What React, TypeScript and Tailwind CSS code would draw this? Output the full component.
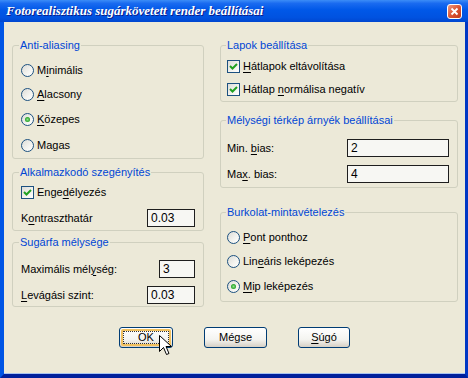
import React from 'react';

const U = ({ children }: { children: React.ReactNode }) => (
    <span className="underline underline-offset-[2px] decoration-[1px]">{children}</span>
);

const Check = () => (
    <span className="flex h-[13px] w-[13px] shrink-0 items-center justify-center border border-[#1C5180] bg-[linear-gradient(135deg,#DCDCD7_0%,#F4F4F0_60%,#FFFFFF_100%)]">
        <svg width="9" height="9" viewBox="0 0 9 9">
            <path d="M1 4 L3.5 6.5 L8 2" fill="none" stroke="#21A121" strokeWidth="2" />
        </svg>
    </span>
);

const Radio = ({ on = false }: { on?: boolean }) => (
    <span className="flex h-[13px] w-[13px] shrink-0 items-center justify-center rounded-full border border-[#1C5180] bg-[linear-gradient(135deg,#DCDCD7_0%,#F4F4F0_60%,#FFFFFF_100%)]">
        {on && <span className="h-[5px] w-[5px] rounded-full bg-[radial-gradient(circle,#8FE08F_0%,#21A121_70%,#1A8A1A_100%)]" />}
    </span>
);

const Field = ({ value, w }: { value: string; w: string }) => (
    <div className={`h-[18px] ${w} border border-[#1E1E1E] bg-[#F7F7F3] pl-[3px] leading-[16px] text-[12px]`}>
        {value}
    </div>
);

const Group = ({ title, h, ml = 'ml-[6px]', children }: { title: string; h: string; ml?: string; children: React.ReactNode }) => (
    <fieldset className={`${h} rounded-[3px] border border-[#D0D0BF]`}>
        <legend className={`${ml} px-[1px] leading-[13px] text-[#0046D5]`}>{title}</legend>
        {children}
    </fieldset>
);

const Btn = ({ w, children, focus = false }: { w: string; children: React.ReactNode; focus?: boolean }) => (
    <div className={`relative h-[21px] ${w} rounded-[3px] border border-[#003C74] bg-[linear-gradient(to_bottom,#FFFFFF_0%,#F4F4F0_60%,#D6D0C5_100%)] p-[1px]`}>
        <div className={`flex h-full w-full items-center justify-center rounded-[2px] ${focus ? 'border-2 border-[#F1C15F]' : ''}`}>
            <div className={`flex h-full w-full items-center justify-center ${focus ? 'outline outline-1 outline-dotted outline-[#333] -outline-offset-1' : ''}`}>
                {children}
            </div>
        </div>
        {focus && (
            <svg className="absolute left-[39px] top-[7px]" width="13" height="21" viewBox="0 0 13 21">
                <path d="M0.5 0.5 L0.5 16.5 L4.5 12.5 L7.5 19.5 L10 18.5 L7 11.5 L12.5 11.5 Z" fill="#FFFFFF" stroke="#000000" strokeWidth="1" />
            </svg>
        )}
    </div>
);

export default function App() {
    return (
        <div className="flex h-[378px] w-[468px] flex-col bg-[#0055E5] font-['Liberation_Sans',Arial,sans-serif] text-[11px] text-black">
            {/* Címsor */}
            <div className="flex h-[22px] shrink-0 items-center justify-between bg-[linear-gradient(to_bottom,#3C8DF7_0%,#1A6BF0_15%,#0058E8_45%,#0052E0_80%,#0046CF_100%)] pl-[6px] pr-[6px]">
                <span className="font-['Liberation_Serif',serif] text-[13px] font-bold italic text-white [text-shadow:1px_1px_0_#0A1E8C]">
                    Fotorealisztikus sugárkövetett render beállításai
                </span>
                <span className="flex h-[15px] w-[15px] items-center justify-center rounded-[3px] border border-white bg-[linear-gradient(135deg,#F09A80_0%,#DC5533_50%,#C03A1A_100%)]">
                    <svg width="9" height="9" viewBox="0 0 9 9">
                        <path d="M1.5 1.5 L7.5 7.5 M7.5 1.5 L1.5 7.5" stroke="#FFFFFF" strokeWidth="1.8" />
                    </svg>
                </span>
            </div>

            <div className="flex flex-1 border-b-[4px] border-l-[4px] border-r-[3px] border-b-[#00209C] border-l-[#0055E5] border-r-[#0037C4]">
                <div className="flex flex-1 flex-col bg-[#ECE9D8] border-b border-b-[#A8C3F0]">
                    <div className="flex items-start gap-[16px] pl-[8px] pt-[17px]">
                        {/* Bal oszlop */}
                        <div className="flex w-[192px] flex-col">
                            <Group title="Anti-aliasing" h="h-[120px]" ml="ml-[6px]">
                                <div className="flex flex-col pl-[8px]">
                                    <label className="mt-[12px] flex h-[13px] items-center gap-[3px]"><Radio /><span>M<U>i</U>nimális</span></label>
                                    <label className="mt-[11px] flex h-[13px] items-center gap-[3px]"><Radio /><span><U>A</U>lacsony</span></label>
                                    <label className="mt-[12px] flex h-[13px] items-center gap-[3px]"><Radio on /><span><U>K</U>özepes</span></label>
                                    <label className="mt-[13px] flex h-[13px] items-center gap-[3px]"><Radio /><span>Magas</span></label>
                                </div>
                            </Group>
                            <div className="mt-[7px]">
                                <Group title="Alkalmazkodó szegényítés" h="h-[65px]">
                                    <div className="flex flex-col pl-[8px] pr-[8px]">
                                        <label className="mt-[7px] flex h-[13px] items-center gap-[3px]"><Check /><span>Enge<U>d</U>élyezés</span></label>
                                        <div className="mt-[10px] flex items-center justify-between">
                                            <span>K<U>o</U>ntraszthatár</span>
                                            <Field value="0.03" w="w-[48px]" />
                                        </div>
                                    </div>
                                </Group>
                            </div>
                            <div className="mt-[5px]">
                                <Group title="Sugárfa mélysége" h="h-[71px]">
                                    <div className="flex flex-col pl-[8px] pr-[8px]">
                                        <div className="mt-[11px] flex items-center justify-between">
                                            <span>Maximális mél<U>y</U>ség:</span>
                                            <Field value="3" w="w-[36px]" />
                                        </div>
                                        <div className="mt-[8px] flex items-center justify-between">
                                            <span><U>L</U>evágási szint:</span>
                                            <Field value="0.03" w="w-[48px]" />
                                        </div>
                                    </div>
                                </Group>
                            </div>
                        </div>

                        {/* Jobb oszlop */}
                        <div className="flex w-[238px] flex-col">
                            <Group title="Lapok beállítása" h="h-[63px]" ml="ml-[5px]">
                                <div className="flex flex-col pl-[6px]">
                                    <label className="mt-[8px] flex h-[13px] items-center gap-[3px]"><Check /><span><U>H</U>átlapok eltávolítása</span></label>
                                    <label className="mt-[10px] flex h-[13px] items-center gap-[3px]"><Check /><span>Hátlap <U>n</U>ormálisa negatív</span></label>
                                </div>
                            </Group>
                            <div className="mt-[12px]">
                                <Group title="Mélységi térkép árnyék beállításai" h="h-[74px]" ml="ml-[5px]">
                                    <div className="flex flex-col pl-[6px] pr-[8px]">
                                        <div className="mt-[12px] flex items-center justify-between">
                                            <span>Min. <U>b</U>ias:</span>
                                            <Field value="2" w="w-[102px]" />
                                        </div>
                                        <div className="mt-[8px] flex items-center justify-between">
                                            <span>Ma<U>x</U>. bias:</span>
                                            <Field value="4" w="w-[102px]" />
                                        </div>
                                    </div>
                                </Group>
                            </div>
                            <div className="mt-[18px]">
                                <Group title="Burkolat-mintavételezés" h="h-[96px]" ml="ml-[5px]">
                                    <div className="flex flex-col pl-[6px]">
                                        <label className="mt-[12px] flex h-[13px] items-center gap-[3px]"><Radio /><span><U>P</U>ont ponthoz</span></label>
                                        <label className="mt-[11px] flex h-[13px] items-center gap-[3px]"><Radio /><span>Lin<U>e</U>áris leképezés</span></label>
                                        <label className="mt-[12px] flex h-[13px] items-center gap-[3px]"><Radio on /><span><U>M</U>ip leképezés</span></label>
                                    </div>
                                </Group>
                            </div>
                        </div>
                    </div>

                    {/* Gombok */}
                    <div className="mt-[20px] flex justify-center gap-[31px]">
                        <Btn w="w-[54px]" focus>OK</Btn>
                        <Btn w="w-[63px]">Mégse</Btn>
                        <Btn w="w-[52px]"><span><U>S</U>úgó</span></Btn>
                    </div>
                </div>
            </div>
        </div>
    );
}
